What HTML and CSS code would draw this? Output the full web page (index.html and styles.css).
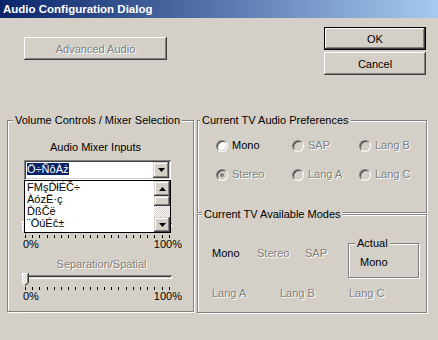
FILE: index.html
```html
<!DOCTYPE html>
<html lang="en">
<head>
    <meta charset="UTF-8">
    <title>Audio Configuration Dialog</title>
    <link rel="stylesheet" href="styles.css">
</head>
<body>
    <div class="window">
        <div class="titlebar">Audio Configuration Dialog</div>

        <div class="top-row">
            <button class="btn btn-wide dis" disabled>Advanced Audio</button>
            <div class="actions">
                <button class="btn btn-default">OK</button>
                <button class="btn">Cancel</button>
            </div>
        </div>

        <div class="groups">
            <!-- Volume controls -->
            <div class="group volume">
                <span class="group-title">Volume Controls / Mixer Selection</span>
                <div class="mixer">
                    <div class="caption caption-inputs">Audio Mixer Inputs</div>
                    <div class="combo">
                        <span class="combo-value">Ö÷ÑôÀż</span>
                        <span class="arrow-btn">
                            <svg width="7" height="4" viewBox="0 0 7 4"><path d="M0 0h7L3.5 4z" fill="#000"/></svg>
                        </span>
                    </div>

                    <div class="trackbar trackbar-first">
                        <div class="track-area">
                            <div class="track"></div>
                            <svg class="thumb" width="7" height="13" viewBox="0 0 7 13">
                                <defs>
                                    <pattern id="dither1" width="2" height="2" patternUnits="userSpaceOnUse">
                                        <rect width="2" height="2" fill="#d4d0c8"/>
                                        <rect width="1" height="1" fill="#fff"/>
                                        <rect x="1" y="1" width="1" height="1" fill="#fff"/>
                                    </pattern>
                                </defs>
                                <path d="M0 0h6v10l-3 3-3-3z" fill="url(#dither1)"/>
                                <path d="M0.5 10V0.5h5" fill="none" stroke="#fff"/>
                                <path d="M6.5 0v10l-3.5 3" fill="none" stroke="#404040"/>
                                <path d="M5.5 1v8.6l-2.5 2.5" fill="none" stroke="#808080"/>
                            </svg>
                        </div>
                        <div class="ticks"><i></i><i></i><i></i><i></i><i></i><i></i><i></i><i></i><i></i><i></i><i></i><i></i><i></i><i></i><i></i><i></i><i></i><i></i><i></i><i></i><i></i></div>
                        <div class="scale"><span>0%</span><span>100%</span></div>
                    </div>

                    <div class="caption caption-spatial dis">Separation/Spatial</div>

                    <div class="trackbar trackbar-second">
                        <div class="track-area">
                            <div class="track"></div>
                            <svg class="thumb" width="7" height="13" viewBox="0 0 7 13">
                                <defs>
                                    <pattern id="dither2" width="2" height="2" patternUnits="userSpaceOnUse">
                                        <rect width="2" height="2" fill="#d4d0c8"/>
                                        <rect width="1" height="1" fill="#fff"/>
                                        <rect x="1" y="1" width="1" height="1" fill="#fff"/>
                                    </pattern>
                                </defs>
                                <path d="M0 0h6v10l-3 3-3-3z" fill="url(#dither2)"/>
                                <path d="M0.5 10V0.5h5" fill="none" stroke="#fff"/>
                                <path d="M6.5 0v10l-3.5 3" fill="none" stroke="#404040"/>
                                <path d="M5.5 1v8.6l-2.5 2.5" fill="none" stroke="#808080"/>
                            </svg>
                        </div>
                        <div class="ticks"><i></i><i></i><i></i><i></i><i></i><i></i><i></i><i></i><i></i><i></i><i></i><i></i><i></i><i></i><i></i><i></i><i></i><i></i><i></i><i></i><i></i></div>
                        <div class="scale"><span>0%</span><span>100%</span></div>
                    </div>
                </div>

                <!-- open drop-down of the mixer combo -->
                <div class="dropdown-list">
                    <ul class="items">
                        <li>FMşĎłÉČ÷</li>
                        <li>ÀózË·ç</li>
                        <li>ĎßČë</li>
                        <li>¨ÖúÉč±</li>
                    </ul>
                    <div class="scrollbar">
                        <span class="sb-btn">
                            <svg width="7" height="4" viewBox="0 0 7 4"><path d="M0 4h7L3.5 0z" fill="#000"/></svg>
                        </span>
                        <span class="sb-thumb"></span>
                        <span class="sb-track"></span>
                        <span class="sb-btn">
                            <svg width="7" height="4" viewBox="0 0 7 4"><path d="M0 0h7L3.5 4z" fill="#000"/></svg>
                        </span>
                    </div>
                </div>
            </div>

            <div class="right-col">
                <!-- Preferences -->
                <div class="group prefs">
                    <span class="group-title">Current TV Audio Preferences</span>
                    <div class="radio-grid">
                        <label class="radio"><span class="radio-box"></span>Mono</label>
                        <label class="radio dis"><span class="radio-box"></span>SAP</label>
                        <label class="radio dis"><span class="radio-box"></span>Lang B</label>
                        <label class="radio dis"><span class="radio-box checked"></span>Stereo</label>
                        <label class="radio dis"><span class="radio-box"></span>Lang A</label>
                        <label class="radio dis"><span class="radio-box"></span>Lang C</label>
                    </div>
                </div>

                <!-- Available modes -->
                <div class="group modes">
                    <span class="group-title">Current TV Available Modes</span>
                    <div class="mode-row">
                        <span class="mode m-mono">Mono</span>
                        <span class="mode m-stereo dis">Stereo</span>
                        <span class="mode m-sap dis">SAP</span>
                        <div class="group actual">
                            <span class="group-title">Actual</span>
                            <div class="actual-value">Mono</div>
                        </div>
                    </div>
                    <div class="mode-row second">
                        <span class="mode m-langa dis">Lang A</span>
                        <span class="mode m-langb dis">Lang B</span>
                        <span class="mode dis">Lang C</span>
                    </div>
                </div>
            </div>
        </div>
    </div>
</body>
</html>
```

FILE: styles.css
```css
* {
    box-sizing: border-box;
}

body {
    margin: 0;
    background-color: #d4d0c8;
    font-family: "Liberation Sans", Arial, sans-serif;
    font-size: 11px;
    color: #000;
}

.window {
    width: 438px;
    height: 340px;
    overflow: hidden;
    background-color: #d4d0c8;
}

.titlebar {
    height: 18px;
    line-height: 18px;
    padding-left: 3px;
    color: #fff;
    font-weight: bold;
    font-size: 11.5px;
    background: linear-gradient(to right, #0a246a, #a6caf0);
}

.dis {
    color: #808080;
    text-shadow: 1px 1px 0 #fff;
}

/* Buttons */
.btn {
    display: block;
    padding: 0;
    border: none;
    background-color: #d4d0c8;
    font-family: inherit;
    font-size: 11px;
    color: #000;
    box-shadow: inset -1px -1px #404040, inset 1px 1px #fff, inset -2px -2px #808080, inset 2px 2px #d4d0c8;
}

.btn.dis {
    color: #808080;
}

.btn-default {
    box-shadow: inset 0 0 0 1px #000, inset -2px -2px #404040, inset 2px 2px #fff, inset -3px -3px #808080;
}

.top-row {
    display: flex;
    align-items: flex-start;
    padding: 9px 12px 0 24px;
}

.btn-wide {
    width: 143px;
    height: 23px;
    margin-top: 10px;
}

.actions {
    margin-left: auto;
    display: flex;
    flex-direction: column;
    gap: 2px;
}

.actions .btn {
    width: 102px;
    height: 23px;
}

/* Group boxes */
.groups {
    display: flex;
    align-items: flex-start;
    margin-top: 45px;
    padding-left: 7px;
}

.group {
    position: relative;
    border: 1px solid #808080;
    box-shadow: inset 1px 1px #fff, 1px 1px #fff;
}

.group-title {
    position: absolute;
    top: -7px;
    line-height: 13px;
    padding: 0 2px;
    background-color: #d4d0c8;
    white-space: nowrap;
}

.volume {
    width: 187px;
    height: 192px;
    padding-left: 16px;
}

.volume > .group-title {
    left: 5px;
}

.mixer {
    width: 148px;
}

.caption {
    line-height: 13px;
    text-align: center;
}

.caption-inputs {
    margin-top: 20px;
    padding-right: 5px;
}

.caption-spatial {
    margin-top: 8px;
    padding-left: 7px;
}

/* Combo box */
.combo {
    display: flex;
    align-items: flex-start;
    width: 147px;
    height: 20px;
    margin-top: 6px;
    padding: 2px;
    background-color: #fff;
    box-shadow: inset 1px 1px #808080, inset -1px -1px #fff, inset 2px 2px #404040, inset -2px -2px #d4d0c8;
}

.combo-value {
    margin: 1px 0 0 1px;
    line-height: 12px;
    background-color: #0a246a;
    color: #fff;
}

.arrow-btn,
.sb-btn {
    display: flex;
    align-items: center;
    justify-content: center;
    width: 16px;
    height: 16px;
    background-color: #d4d0c8;
    box-shadow: inset -1px -1px #404040, inset 1px 1px #d4d0c8, inset -2px -2px #808080, inset 2px 2px #fff;
}

.arrow-btn {
    margin-left: auto;
}

/* Trackbars */
.trackbar-first {
    margin-top: 41px;
}

.trackbar-second {
    margin-top: 2px;
}

.track-area {
    position: relative;
    height: 14px;
}

.track {
    position: absolute;
    top: 2px;
    left: 0;
    right: 0;
    height: 4px;
    background-color: #d4d0c8;
    box-shadow: inset 1px 1px #808080, inset -1px -1px #fff, inset 2px 2px #404040;
}

.thumb {
    position: absolute;
    top: 0;
    left: -2px;
}

.ticks {
    display: flex;
    justify-content: space-between;
    height: 4px;
    padding: 0 2px 0 1px;
}

.ticks i {
    width: 1px;
    height: 3px;
    background-color: #000;
}

.scale {
    display: flex;
    justify-content: space-between;
    margin: 0 -10px 0 -1px;
    line-height: 11px;
}

/* Open list of the combo */
.dropdown-list {
    position: absolute;
    left: 16px;
    top: 59px;
    width: 147px;
    height: 53px;
    display: flex;
    border: 1px solid #000;
    background-color: #fff;
}

.items {
    flex: 1;
    margin: 0;
    padding: 0 0 0 2px;
    list-style: none;
    line-height: 12px;
    overflow: hidden;
}

.items li {
    white-space: nowrap;
}

.scrollbar {
    display: flex;
    flex-direction: column;
    width: 16px;
}

.sb-btn {
    height: 15px;
}

.sb-thumb {
    height: 10px;
    background-color: #d4d0c8;
    box-shadow: inset -1px -1px #404040, inset 1px 1px #d4d0c8, inset -2px -2px #808080, inset 2px 2px #fff;
}

.sb-track {
    flex: 1;
    background: repeating-conic-gradient(#fff 0 25%, #d4d0c8 0 50%) 0 0 / 2px 2px;
}

/* Right column */
.right-col {
    display: flex;
    flex-direction: column;
    width: 230px;
    margin-left: 3px;
}

.prefs {
    height: 93px;
    padding: 18px 0 0 18px;
}

.prefs > .group-title {
    left: 2px;
}

.radio-grid {
    display: grid;
    grid-template-columns: 76px 67px auto;
    row-gap: 16px;
}

.radio {
    display: flex;
    align-items: center;
    gap: 4px;
    line-height: 13px;
}

.radio-box {
    position: relative;
    flex: none;
    width: 12px;
    height: 12px;
    border-radius: 50%;
    border: 1px solid;
    border-color: #808080 #fff #fff #808080;
    background-color: #fff;
    box-shadow: inset 1px 1px #404040, inset -1px -1px #d4d0c8;
}

.radio.dis .radio-box {
    background-color: #d4d0c8;
}

.radio-box.checked::after {
    content: "";
    position: absolute;
    left: 3px;
    top: 3px;
    width: 4px;
    height: 4px;
    border-radius: 50%;
    background-color: #808080;
}

.modes {
    height: 99px;
    margin-top: 1px;
    padding: 28px 0 0 14px;
}

.modes > .group-title {
    left: 4px;
}

.mode-row {
    display: flex;
    align-items: flex-start;
}

.mode-row.second {
    margin-top: 9px;
}

.mode {
    line-height: 13px;
}

.mode-row:first-of-type .mode {
    padding-top: 4px;
}

.m-mono { width: 45px; }
.m-stereo { width: 48px; }
.m-sap { width: 43px; }
.m-langa { width: 68px; }
.m-langb { width: 69px; }

.actual {
    width: 71px;
    height: 35px;
    padding: 12px 0 0 11px;
}

.actual > .group-title {
    left: 6px;
}

.actual-value {
    line-height: 13px;
}
```
